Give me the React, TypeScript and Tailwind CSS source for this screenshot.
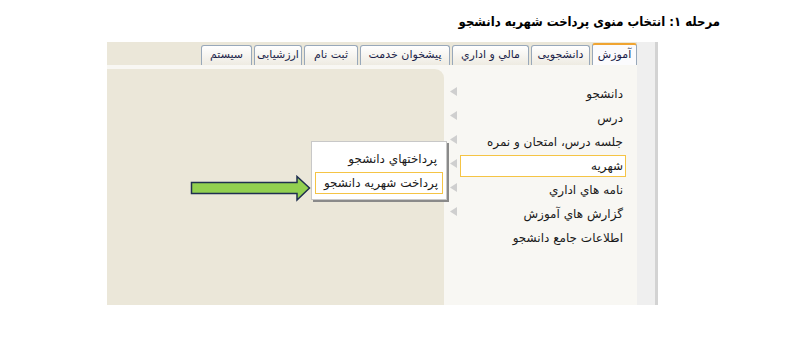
import React from "react";

const fa = { fontFamily: '"DejaVu Sans", "Noto Sans", sans-serif' };
const faCond = { fontFamily: '"DejaVu Sans Condensed", "DejaVu Sans", sans-serif' };

const tabs: { label: string; w: string }[] = [
  { label: "سیستم", w: "w-[51px]" },
  { label: "ارزشیابی", w: "w-[48px]" },
  { label: "ثبت نام", w: "w-[54px]" },
  { label: "پیشخوان خدمت", w: "w-[90px]" },
  { label: "مالي و اداري", w: "w-[77px]" },
  { label: "دانشجویی", w: "w-[59px]" },
];

const items: { label: string; arrow: boolean; active?: boolean }[] = [
  { label: "دانشجو", arrow: true },
  { label: "درس", arrow: true },
  { label: "جلسه درس، امتحان و نمره", arrow: true },
  { label: "شهریه", arrow: true, active: true },
  { label: "نامه هاي اداري", arrow: true },
  { label: "گزارش هاي آموزش", arrow: true },
  { label: "اطلاعات جامع دانشجو", arrow: false },
];

function Arrow() {
  return (
    <svg width="7" height="9" viewBox="0 0 7 9" className="absolute left-[6px] top-[5px]">
      <polygon points="0,4.5 7,0 7,9" fill="#cfcfcf" />
    </svg>
  );
}

export default function App() {
  return (
    <div className="relative w-[812px] h-[339px] bg-white overflow-hidden" style={fa}>
      <div className="h-[42px] flex items-center justify-end pr-[92px]">
        <div dir="rtl" className="text-[13px] text-black leading-none font-bold whitespace-nowrap" style={faCond}>
          مرحله ۱: انتخاب منوی پرداخت شهریه دانشجو
        </div>
      </div>

      <div className="ml-[107px] w-[551px] h-[263px] flex">
        <div className="w-[530px] flex flex-col">
          <div className="h-[23px] bg-[#ebe7d9] flex items-end justify-end gap-[2px]">
            {tabs.map((t) => (
              <div
                key={t.label}
                dir="rtl"
                className={`${t.w} h-[20px] border border-b-0 border-[#98a8ba] rounded-t-[3px] bg-gradient-to-b from-white to-[#eeebe2] flex items-center justify-center text-[11px] text-[#1b1f4a] whitespace-nowrap`}
              >
                {t.label}
              </div>
            ))}
            <div
              dir="rtl"
              className="w-[45px] h-[22px] border border-b-0 border-[#98a8ba] border-t-2 border-t-[#f0a431] rounded-t-[3px] bg-[#fbfbfd] flex items-center justify-center text-[11px] text-[#1b1f4a] whitespace-nowrap"
            >
              آموزش
            </div>
          </div>
          <div className="flex-1 flex bg-[#f8f7f3] pt-[4px]">
            <div className="w-[337px] bg-[#ebe7d9] rounded-tr-[9px]" />
            <div className="flex-1 pt-[13px] flex flex-col">
              {items.map((it) => (
                <div key={it.label} className="relative h-[24px] flex items-center">
                  {it.arrow && <Arrow />}
                  <div
                    dir="rtl"
                    className={`ml-[16px] w-[166px] h-[22px] flex items-center pr-[2px] text-[12px] text-[#1a1a1a] whitespace-nowrap ${
                      it.active ? "border border-[#f5c445] bg-white" : "border border-transparent"
                    }`}
                  >
                    {it.label}
                  </div>
                </div>
              ))}
            </div>
          </div>
        </div>
        <div className="w-[18px] bg-[#efefef]" />
        <div className="w-[3px] bg-[#d3d3d3]" />
      </div>

      {/* submenu popup */}
      <div className="absolute left-[311px] top-[141px] w-[136px] h-[59px] bg-white border border-[#c8c8c8] shadow-[2px_2px_0_#8a8a8a] flex flex-col pt-[6px] px-[3px]">
        <div dir="rtl" className="h-[22px] flex items-center pr-[6px] text-[12px] text-[#1a1a1a] whitespace-nowrap">
          پرداختهاي دانشجو
        </div>
        <div
          dir="rtl"
          className="mt-[2px] h-[22px] border border-[#f5c445] flex items-center pr-[4px] text-[12px] text-[#1a1a1a] whitespace-nowrap"
        >
          پرداخت شهريه دانشجو
        </div>
      </div>

      {/* green arrow */}
      <svg className="absolute left-[190px] top-[175px]" width="122" height="27" viewBox="0 0 122 27">
        <polygon
          points="1.5,7.5 107,7.5 107,1.5 119.5,13 107,25 107,18.5 1.5,18.5"
          fill="#92d050"
          stroke="#1f2f4f"
          strokeWidth="1.5"
          strokeLinejoin="miter"
        />
      </svg>
    </div>
  );
}
